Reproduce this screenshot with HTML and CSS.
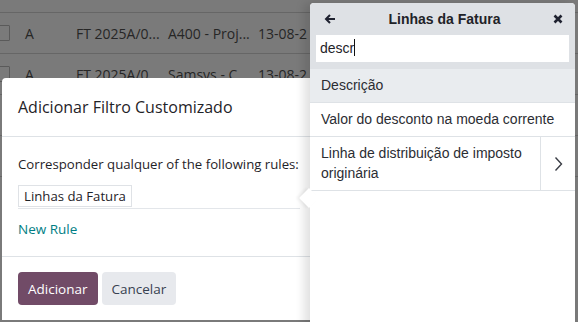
FILE: index.html
```html
<!DOCTYPE html>
<html lang="pt">
<head>
<meta charset="UTF-8">
<title>Adicionar Filtro Customizado</title>
<link rel="stylesheet" href="styles.css">
</head>
<body>

<div class="list">
  <div class="row row-head"></div>
  <div class="row">
    <span class="cell check"><span class="box"></span></span>
    <span class="cell state">A</span>
    <span class="cell num">FT 2025A/0...</span>
    <span class="cell partner">A400 - Proj...</span>
    <span class="cell date">13-08-2</span>
  </div>
  <div class="row">
    <span class="cell check"><span class="box"></span></span>
    <span class="cell state">A</span>
    <span class="cell num">FT 2025A/0...</span>
    <span class="cell partner">Samsys - C...</span>
    <span class="cell date">13-08-2</span>
  </div>
  <div class="row"></div>
  <div class="row"></div>
  <div class="row"></div>
</div>

<div class="modal">
  <div class="modal-header">
    <h4>Adicionar Filtro Customizado</h4>
  </div>
  <div class="modal-body">
    <p class="match">Corresponder qualquer of the following rules:</p>
    <div class="rule">
      <span class="path">Linhas da Fatura</span>
    </div>
    <a class="new-rule">New Rule</a>
  </div>
  <div class="modal-footer">
    <button class="btn btn-primary">Adicionar</button>
    <button class="btn btn-secondary">Cancelar</button>
  </div>
</div>

<div class="popover">
  <div class="pop-header">
    <div class="pop-title">
      <span class="back">
        <svg width="12" height="12" viewBox="0 0 12 12"><path d="M11 6H2.5M6 2L2 6l4 4" fill="none" stroke="#1f2230" stroke-width="2"/></svg>
      </span>
      <span class="title">Linhas da Fatura</span>
      <span class="close">
        <svg width="10" height="10" viewBox="0 0 10 10"><path d="M1.5 1.5l7 7M8.5 1.5l-7 7" stroke="#1f2230" stroke-width="2.6"/></svg>
      </span>
    </div>
    <div class="search">descr<span class="caret"></span></div>
  </div>
  <ul class="fields">
    <li class="field active"><span class="label">Descrição</span></li>
    <li class="field"><span class="label">Valor do desconto na moeda corrente</span></li>
    <li class="field">
      <span class="label">Linha de distribuição de imposto originária</span>
      <span class="follow">
        <svg width="9" height="16" viewBox="0 0 9 16"><path d="M1.5 1.5L7.5 8l-6 6.5" fill="none" stroke="#3a3d45" stroke-width="1.4"/></svg>
      </span>
    </li>
  </ul>
  <span class="arrow"></span>
</div>

</body>
</html>
```

FILE: styles.css
```css
body {
  margin: 0;
  width: 578px;
  height: 322px;
  overflow: hidden;
  background-color: #7a7a7a;
  font-family: "Open Sans", sans-serif;
  position: relative;
}

/* dimmed list behind the dialog */
.list {
  color: #262626;
  font-size: 14px;
}
.row {
  height: 40px;
  border-top: 1px solid #666;
  display: flex;
  align-items: center;
}
.row-head {
  height: 12px;
  border-top: none;
}
.cell {
  white-space: nowrap;
}
.check {
  width: 25px;
}
.box {
  display: block;
  width: 14px;
  height: 14px;
  margin-left: -6px;
  border: 1px solid #5a5a5a;
  border-radius: 1px;
}
.state {
  width: 51px;
}
.num {
  width: 92px;
}
.partner {
  width: 90px;
}

/* dialog */
.modal {
  position: absolute;
  left: 2px;
  top: 78px;
  width: 420px;
  height: 242px;
  background: #fff;
  border-radius: 4px 0 0 0;
  color: #1f2328;
}
.modal-header {
  height: 58px;
  border-bottom: 1px solid #dee2e6;
  display: flex;
  align-items: center;
  padding-left: 16px;
}
.modal-header h4 {
  margin: 0;
  font-size: 16px;
  font-weight: 400;
}
.modal-body {
  padding: 15px 16px 0 16px;
  height: 104px;
  border-bottom: 1px solid #dee2e6;
}
.match {
  margin: 0;
  font-size: 13.2px;
  line-height: 24px;
}
.rule {
  margin-top: 8px;
  width: 282px;
  border-bottom: 1px solid #e3e6ea;
  padding-bottom: 1px;
}
.path {
  display: inline-block;
  border: 1px solid #dfe2e6;
  padding: 0 5px;
  font-size: 13.2px;
  line-height: 20px;
}
.new-rule {
  display: block;
  margin-top: 11px;
  color: #017e84;
  font-size: 13.5px;
}
.modal-footer {
  padding: 15px 16px;
  display: flex;
  gap: 4px;
}
.btn {
  border: none;
  border-radius: 4px;
  height: 33px;
  padding: 0 10px;
  font-family: "Open Sans", sans-serif;
  font-size: 13.5px;
}
.btn-primary {
  background: #714b67;
  color: #fff;
}
.btn-secondary {
  background: #e7e9ed;
  color: #374151;
}

/* field selector popover */
.popover {
  position: absolute;
  left: 310px;
  top: 3px;
  width: 265px;
  height: 330px;
  background: #fff;
  border-radius: 4px 4px 0 0;
  box-shadow: -6px 0 10px rgba(0, 0, 0, 0.12);
  font-family: "Liberation Sans", Arial, sans-serif;
  color: #1f2328;
}
.pop-header {
  background: #dee1e5;
  border-radius: 4px 4px 0 0;
  padding: 0 6px 7px 6px;
}
.pop-title {
  height: 32px;
  display: flex;
  align-items: center;
  justify-content: space-between;
  padding: 0 6px 0 8px;
}
.back, .close {
  display: flex;
}
.title {
  font-weight: bold;
  font-size: 14px;
}
.search {
  background: #fff;
  height: 27px;
  line-height: 27px;
  padding-left: 4px;
  font-size: 14px;
}
.caret {
  display: inline-block;
  width: 1px;
  height: 17px;
  background: #111;
  vertical-align: -3px;
}
.fields {
  list-style: none;
  margin: 0;
  padding: 0;
  font-size: 14px;
  color: #2b2d33;
}
.field {
  display: flex;
  border-bottom: 1px solid #dee2e6;
}
.field.active {
  background: #e9ecef;
}
.label {
  flex: 1;
  padding: 6px 8px 7px 11px;
  line-height: 20px;
}
.follow {
  width: 34px;
  border-left: 1px solid #dee2e6;
  display: flex;
  align-items: center;
  justify-content: center;
}
.arrow {
  position: absolute;
  left: -8px;
  top: 188px;
  width: 14px;
  height: 14px;
  background: #fff;
  transform: rotate(45deg);
  box-shadow: -2px 2px 3px rgba(0, 0, 0, 0.06);
}
```
